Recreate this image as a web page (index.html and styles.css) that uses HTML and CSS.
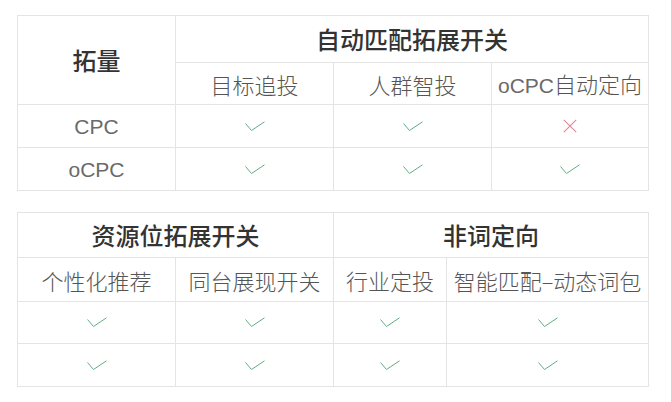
FILE: index.html
```html
<!DOCTYPE html>
<html lang="zh-CN">
<head>
<meta charset="utf-8">
<title>拓量开关</title>
<link rel="stylesheet" href="styles.css">
</head>
<body>
<div class="page">
  <table class="grid grid-a">
    <colgroup><col class="c158"><col class="c158"><col class="c158"><col class="c157"></colgroup>
    <tr class="h47">
      <th rowspan="2" class="big">拓量</th>
      <th colspan="3" class="big">自动匹配拓展开关</th>
    </tr>
    <tr class="h42">
      <td>目标追投</td>
      <td>人群智投</td>
      <td><span class="lat">oCPC</span>自动定向</td>
    </tr>
    <tr class="h43">
      <td class="lat">CPC</td>
      <td><svg class="ok" width="20" height="11" viewBox="0 0 20 11"><polyline points="0.5,2.5 6.5,9.5 19.5,0.8"/></svg></td>
      <td><svg class="ok" width="20" height="11" viewBox="0 0 20 11"><polyline points="0.5,2.5 6.5,9.5 19.5,0.8"/></svg></td>
      <td><svg class="no" width="14" height="14" viewBox="0 0 14 14"><path d="M0.8 0.8 L13.2 13.2 M13.2 0.8 L0.8 13.2"/></svg></td>
    </tr>
    <tr class="h43">
      <td class="lat">oCPC</td>
      <td><svg class="ok" width="20" height="11" viewBox="0 0 20 11"><polyline points="0.5,2.5 6.5,9.5 19.5,0.8"/></svg></td>
      <td><svg class="ok" width="20" height="11" viewBox="0 0 20 11"><polyline points="0.5,2.5 6.5,9.5 19.5,0.8"/></svg></td>
      <td><svg class="ok" width="20" height="11" viewBox="0 0 20 11"><polyline points="0.5,2.5 6.5,9.5 19.5,0.8"/></svg></td>
    </tr>
  </table>

  <table class="grid grid-b">
    <colgroup><col class="c158"><col class="c158"><col class="c113"><col class="c202"></colgroup>
    <tr class="h45">
      <th colspan="2" class="big">资源位拓展开关</th>
      <th colspan="2" class="big">非词定向</th>
    </tr>
    <tr class="h44">
      <td>个性化推荐</td>
      <td>同台展现开关</td>
      <td>行业定投</td>
      <td>智能匹配–动态词包</td>
    </tr>
    <tr class="h42">
      <td><svg class="ok" width="20" height="11" viewBox="0 0 20 11"><polyline points="0.5,2.5 6.5,9.5 19.5,0.8"/></svg></td>
      <td><svg class="ok" width="20" height="11" viewBox="0 0 20 11"><polyline points="0.5,2.5 6.5,9.5 19.5,0.8"/></svg></td>
      <td><svg class="ok" width="20" height="11" viewBox="0 0 20 11"><polyline points="0.5,2.5 6.5,9.5 19.5,0.8"/></svg></td>
      <td><svg class="ok" width="20" height="11" viewBox="0 0 20 11"><polyline points="0.5,2.5 6.5,9.5 19.5,0.8"/></svg></td>
    </tr>
    <tr class="h43">
      <td><svg class="ok" width="20" height="11" viewBox="0 0 20 11"><polyline points="0.5,2.5 6.5,9.5 19.5,0.8"/></svg></td>
      <td><svg class="ok" width="20" height="11" viewBox="0 0 20 11"><polyline points="0.5,2.5 6.5,9.5 19.5,0.8"/></svg></td>
      <td><svg class="ok" width="20" height="11" viewBox="0 0 20 11"><polyline points="0.5,2.5 6.5,9.5 19.5,0.8"/></svg></td>
      <td><svg class="ok" width="20" height="11" viewBox="0 0 20 11"><polyline points="0.5,2.5 6.5,9.5 19.5,0.8"/></svg></td>
    </tr>
  </table>
</div>
</body>
</html>
```

FILE: styles.css
```css
html, body {
  margin: 0;
  padding: 0;
  background: #ffffff;
}
.page {
  padding: 15px 0 0 17px;
  display: flex;
  flex-direction: column;
  gap: 21px;
  font-family: "Noto Sans CJK SC", sans-serif;
}
.grid {
  border-collapse: collapse;
  table-layout: fixed;
  width: 632px;
}
.c158 { width: 158px; }
.c157 { width: 157px; }
.c113 { width: 113px; }
.c202 { width: 202px; }
.grid th, .grid td {
  border: 1px solid #e4e4e4;
  padding: 0;
  text-align: center;
  vertical-align: middle;
  font-size: 22px;
  font-weight: 300;
  color: #555555;
  line-height: 1;
  white-space: nowrap;
}
.grid .lat {
  font-family: "Liberation Sans", sans-serif;
  font-size: 21px;
  font-weight: 400;
  color: #6a6a6a;
}
.grid th.big {
  font-size: 24px;
  font-weight: 500;
  color: #333333;
}
.h47 { height: 47px; }
.h45 { height: 45px; }
.h44 { height: 44px; }
.h43 { height: 43px; }
.h42 { height: 42px; }
svg { display: block; margin: 0 auto; }
.ok polyline {
  fill: none;
  stroke: #5fad80;
  stroke-width: 1;
}
.no path {
  fill: none;
  stroke: #e08792;
  stroke-width: 1.1;
}
```
